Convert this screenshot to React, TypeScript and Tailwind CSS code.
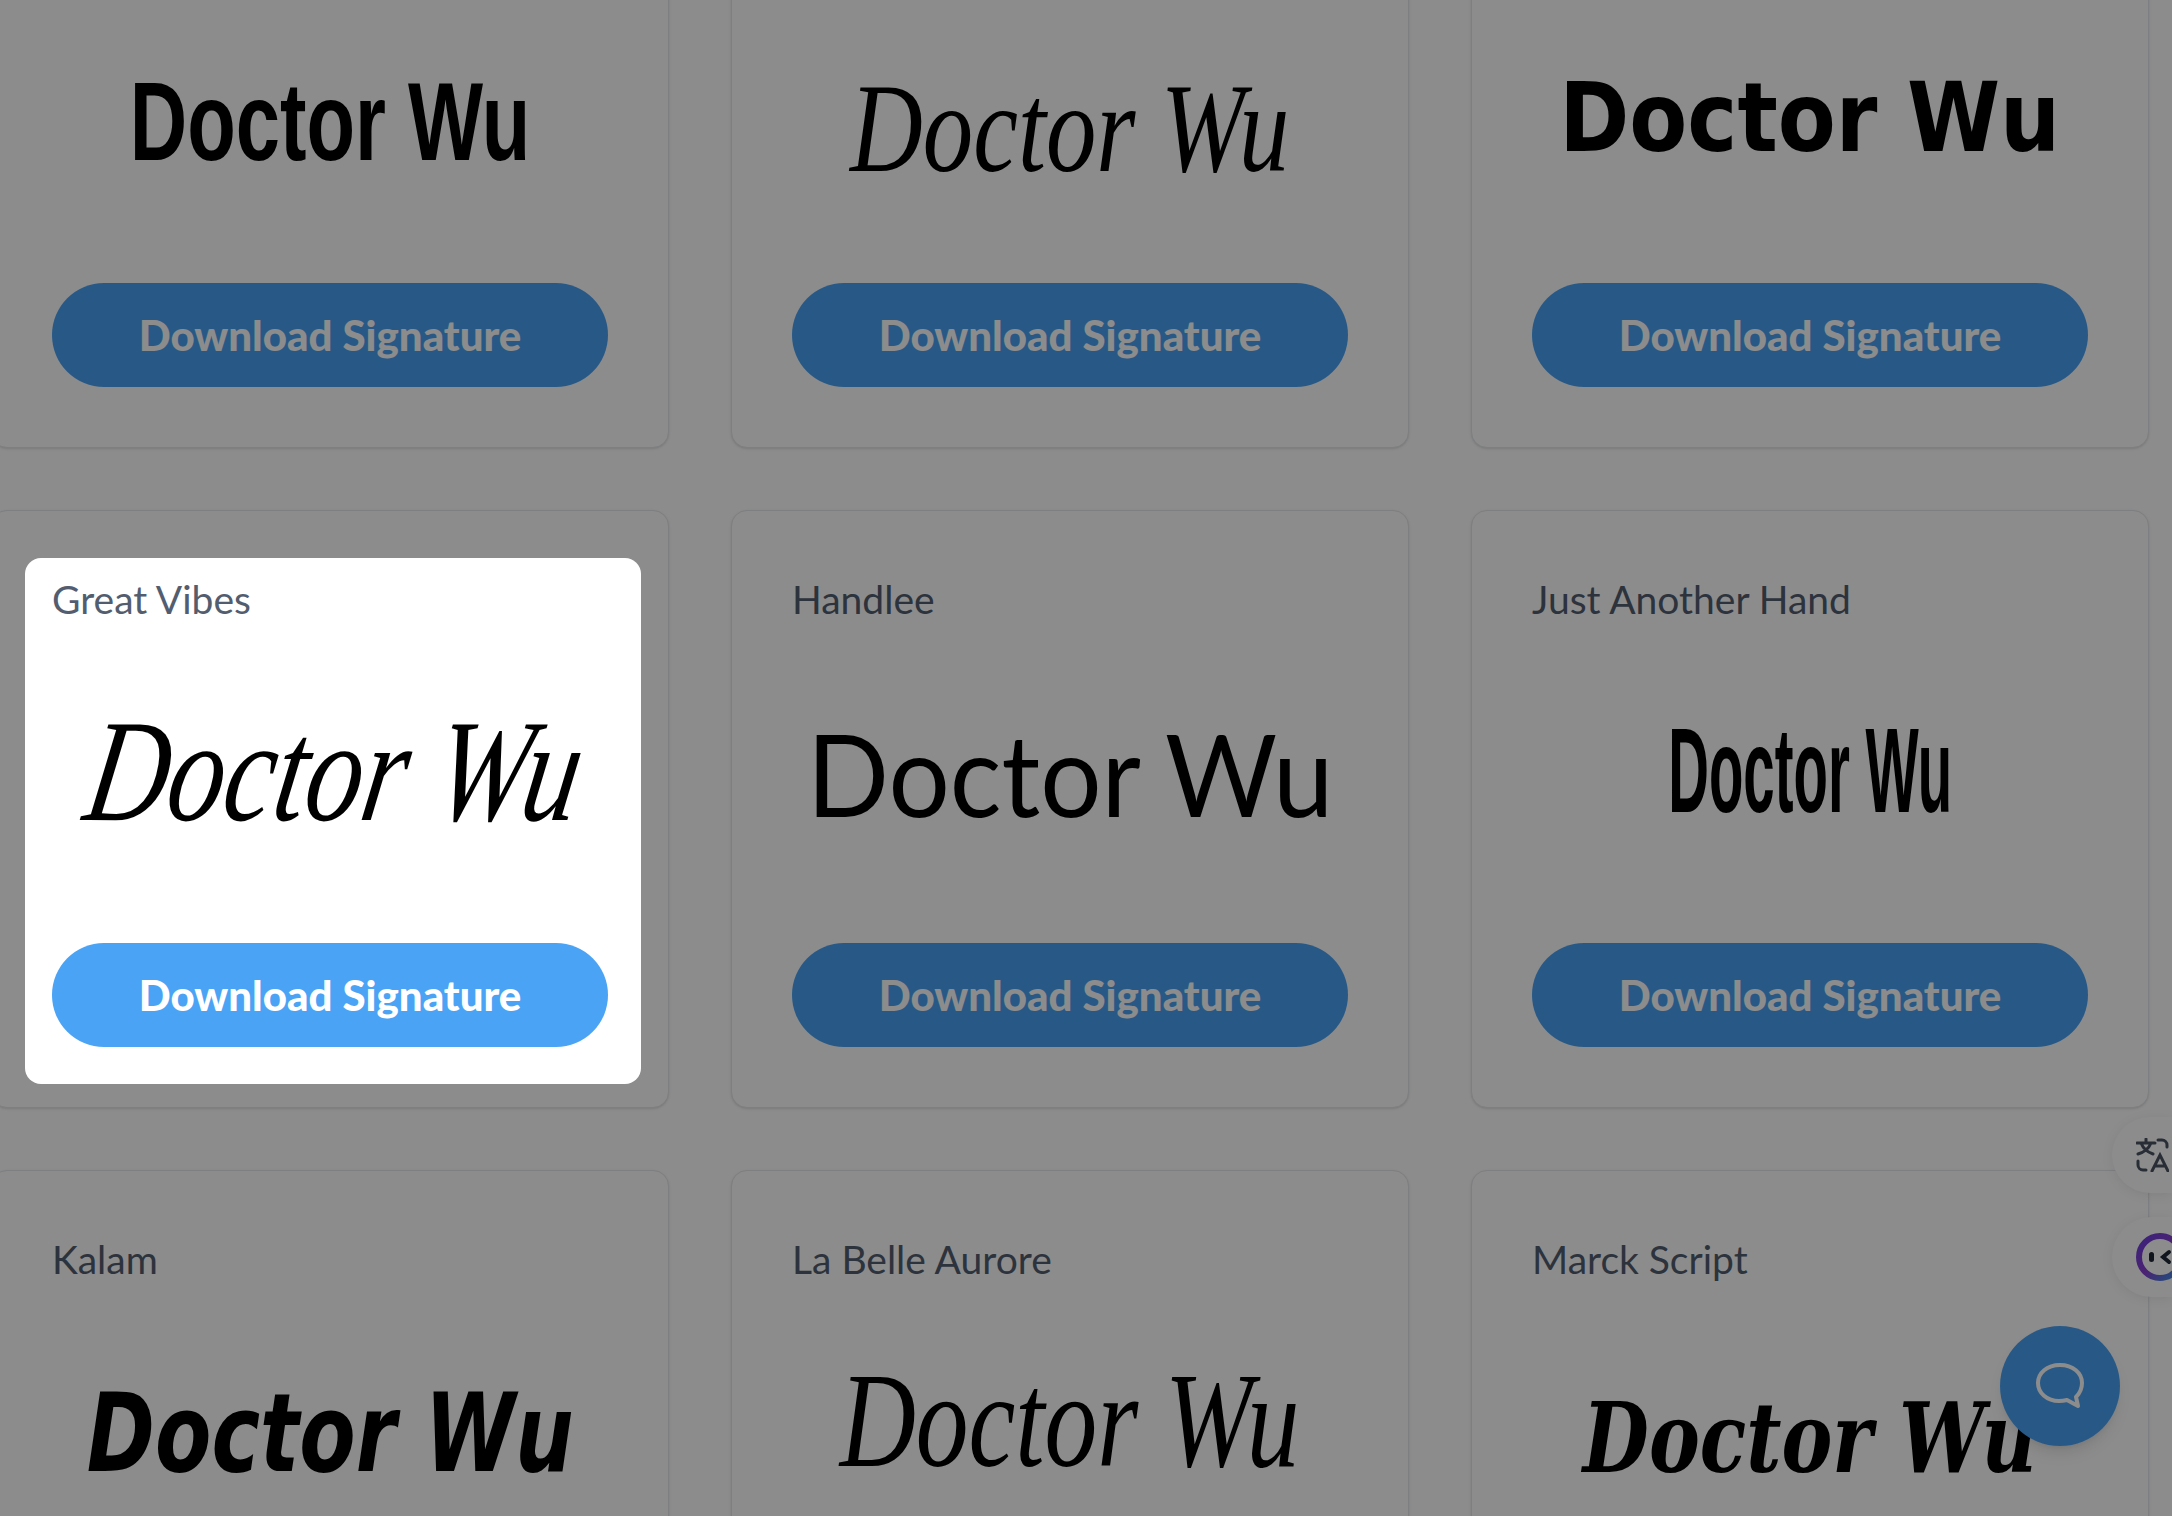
import React from "react";

const sans = "font-['Lato','Liberation_Sans',sans-serif]";

const Signature = ({ className }: { className: string }) => (
  <span className={"inline-block whitespace-nowrap text-black leading-none " + className}>
    Doctor Wu
  </span>
);

const DownloadButton = () => (
  <button
    className={
      sans +
      " h-[104px] w-full rounded-full bg-[#4aa3f5] text-[42px] font-black text-white"
    }
  >
    Download Signature
  </button>
);

const Label = ({ children }: { children?: React.ReactNode }) => (
  <div className={sans + " h-[58px] text-[39px] leading-[56px] text-[#525d70]"}>{children}</div>
);

const Card = ({
  name,
  sigClass,
  boxClass,
}: {
  name?: string;
  sigClass: string;
  boxClass: string;
}) => (
  <div className="flex h-[598px] flex-col rounded-2xl border border-gray-200 bg-white p-[60px] shadow-sm">
    <Label>{name}</Label>
    <div className={"flex flex-1 items-center justify-center " + boxClass}>
      <Signature className={sigClass} />
    </div>
    <DownloadButton />
  </div>
);

// the highlighted card: its contents sit above the dim layer on a white plate
const HighlightCard = () => (
  <div className="h-[598px] rounded-2xl border border-gray-200 bg-white pl-[33px] pr-[27px] pt-[47px] shadow-sm">
    <div className="relative z-20 flex h-[526px] flex-col rounded-[16px] bg-white pl-[27px] pr-[33px] pt-[13px] pb-[37px]">
      <Label>Great Vibes</Label>
      <div className="flex flex-1 items-center justify-center pb-[30px] pl-[11px]">
        <Signature className="font-['Liberation_Serif',serif] italic text-[146px] scale-x-[0.774] -skew-x-12" />
      </div>
      <DownloadButton />
    </div>
  </div>
);

const TranslateIcon = () => (
  <svg width="33" height="34" viewBox="0 0 33 34" fill="none" stroke="#4b5563" strokeWidth="3" strokeLinecap="round">
    <path d="M1 5h18M10 1v4M5 5c2 5 6 9 12 11M15 5c-2 5-6 9-13 11" />
    <path d="M22 2h4a5 5 0 0 1 5 5v2M2 23v4a5 5 0 0 0 5 5h3" />
    <path d="M16 33l8-16 8 16M19 28h10" />
  </svg>
);

const RobotIcon = () => (
  <svg width="48" height="48" viewBox="0 0 48 48" fill="none">
    <defs>
      <linearGradient id="ring" x1="0" y1="0" x2="1" y2="1">
        <stop offset="0" stopColor="#6d3fe0" />
        <stop offset="0.5" stopColor="#8a3fd0" />
        <stop offset="1" stopColor="#2f9be8" />
      </linearGradient>
    </defs>
    <circle cx="24" cy="24" r="21" stroke="url(#ring)" strokeWidth="6" />
    <rect x="13" y="19" width="5" height="10" rx="2.5" fill="#1f2937" />
    <path d="M33 19l-6 5 6 5" stroke="#1f2937" strokeWidth="4" strokeLinecap="round" />
  </svg>
);

const ChatIcon = () => (
  <svg width="50" height="46" viewBox="0 0 50 46" fill="none" stroke="white" strokeWidth="4" strokeLinejoin="round">
    <path d="M25 2C12 2 3 10 3 20c0 10 9 18 21 18 3 0 6-.5 8-1l11 6-2-9c4-4 6-9 6-14C47 10 38 2 25 2z" />
  </svg>
);

export default function App() {
  return (
    <div className="relative h-screen overflow-hidden bg-white">
      <div className="ml-[-9px] mt-[-150px] grid w-[2158px] grid-cols-3 gap-x-[62px] gap-y-[62px]">
        <Card sigClass="font-['Liberation_Sans_Narrow','Liberation_Sans',sans-serif] text-[112px] scale-x-[0.71] font-bold" boxClass="pb-[8px]" />
        <Card sigClass="font-['Liberation_Serif',serif] italic text-[126px] scale-x-[0.8]" boxClass="pt-[6px]" />
        <Card sigClass="font-['DejaVu_Sans',sans-serif] text-[96px] scale-x-[0.88] font-bold" boxClass="pb-[16px]" />

        <HighlightCard />
        <Card name="Handlee" sigClass="font-['Lato',sans-serif] text-[114px] scale-x-[0.95]" boxClass="pb-[26px]" />
        <Card name="Just Another Hand" sigClass="font-['Liberation_Sans_Narrow','Liberation_Sans',sans-serif] text-[120px] scale-x-[0.47] font-bold" boxClass="pb-[32px]" />

        <Card name="Kalam" sigClass="font-['DejaVu_Sans',sans-serif] italic text-[108px] scale-x-[0.76] font-bold" boxClass="pb-[24px]" />
        <Card name="La Belle Aurore" sigClass="font-['Liberation_Serif',serif] italic text-[136px] scale-x-[0.775]" boxClass="pb-[52px]" />
        <Card name="Marck Script" sigClass="font-['DejaVu_Serif',serif] italic text-[97px] scale-x-[0.786] font-bold" boxClass="pb-[16px]" />
      </div>

      <div className="absolute right-0 top-[1117px] flex h-[76px] w-[60px] items-center rounded-l-full bg-white pl-[24px] shadow-[0_2px_12px_rgba(0,0,0,0.08)]">
        <TranslateIcon />
      </div>
      <div className="absolute right-0 top-[1217px] flex h-[80px] w-[60px] items-center overflow-hidden rounded-l-full bg-white pl-[24px] shadow-[0_2px_12px_rgba(0,0,0,0.08)]">
        <div className="shrink-0">
          <RobotIcon />
        </div>
      </div>
      <div className="absolute left-[2000px] top-[1326px] flex h-[120px] w-[120px] items-center justify-center rounded-full bg-[#4aa3f5] shadow-lg">
        <ChatIcon />
      </div>

      <div className="absolute inset-0 z-10 bg-black/45" />
    </div>
  );
}
